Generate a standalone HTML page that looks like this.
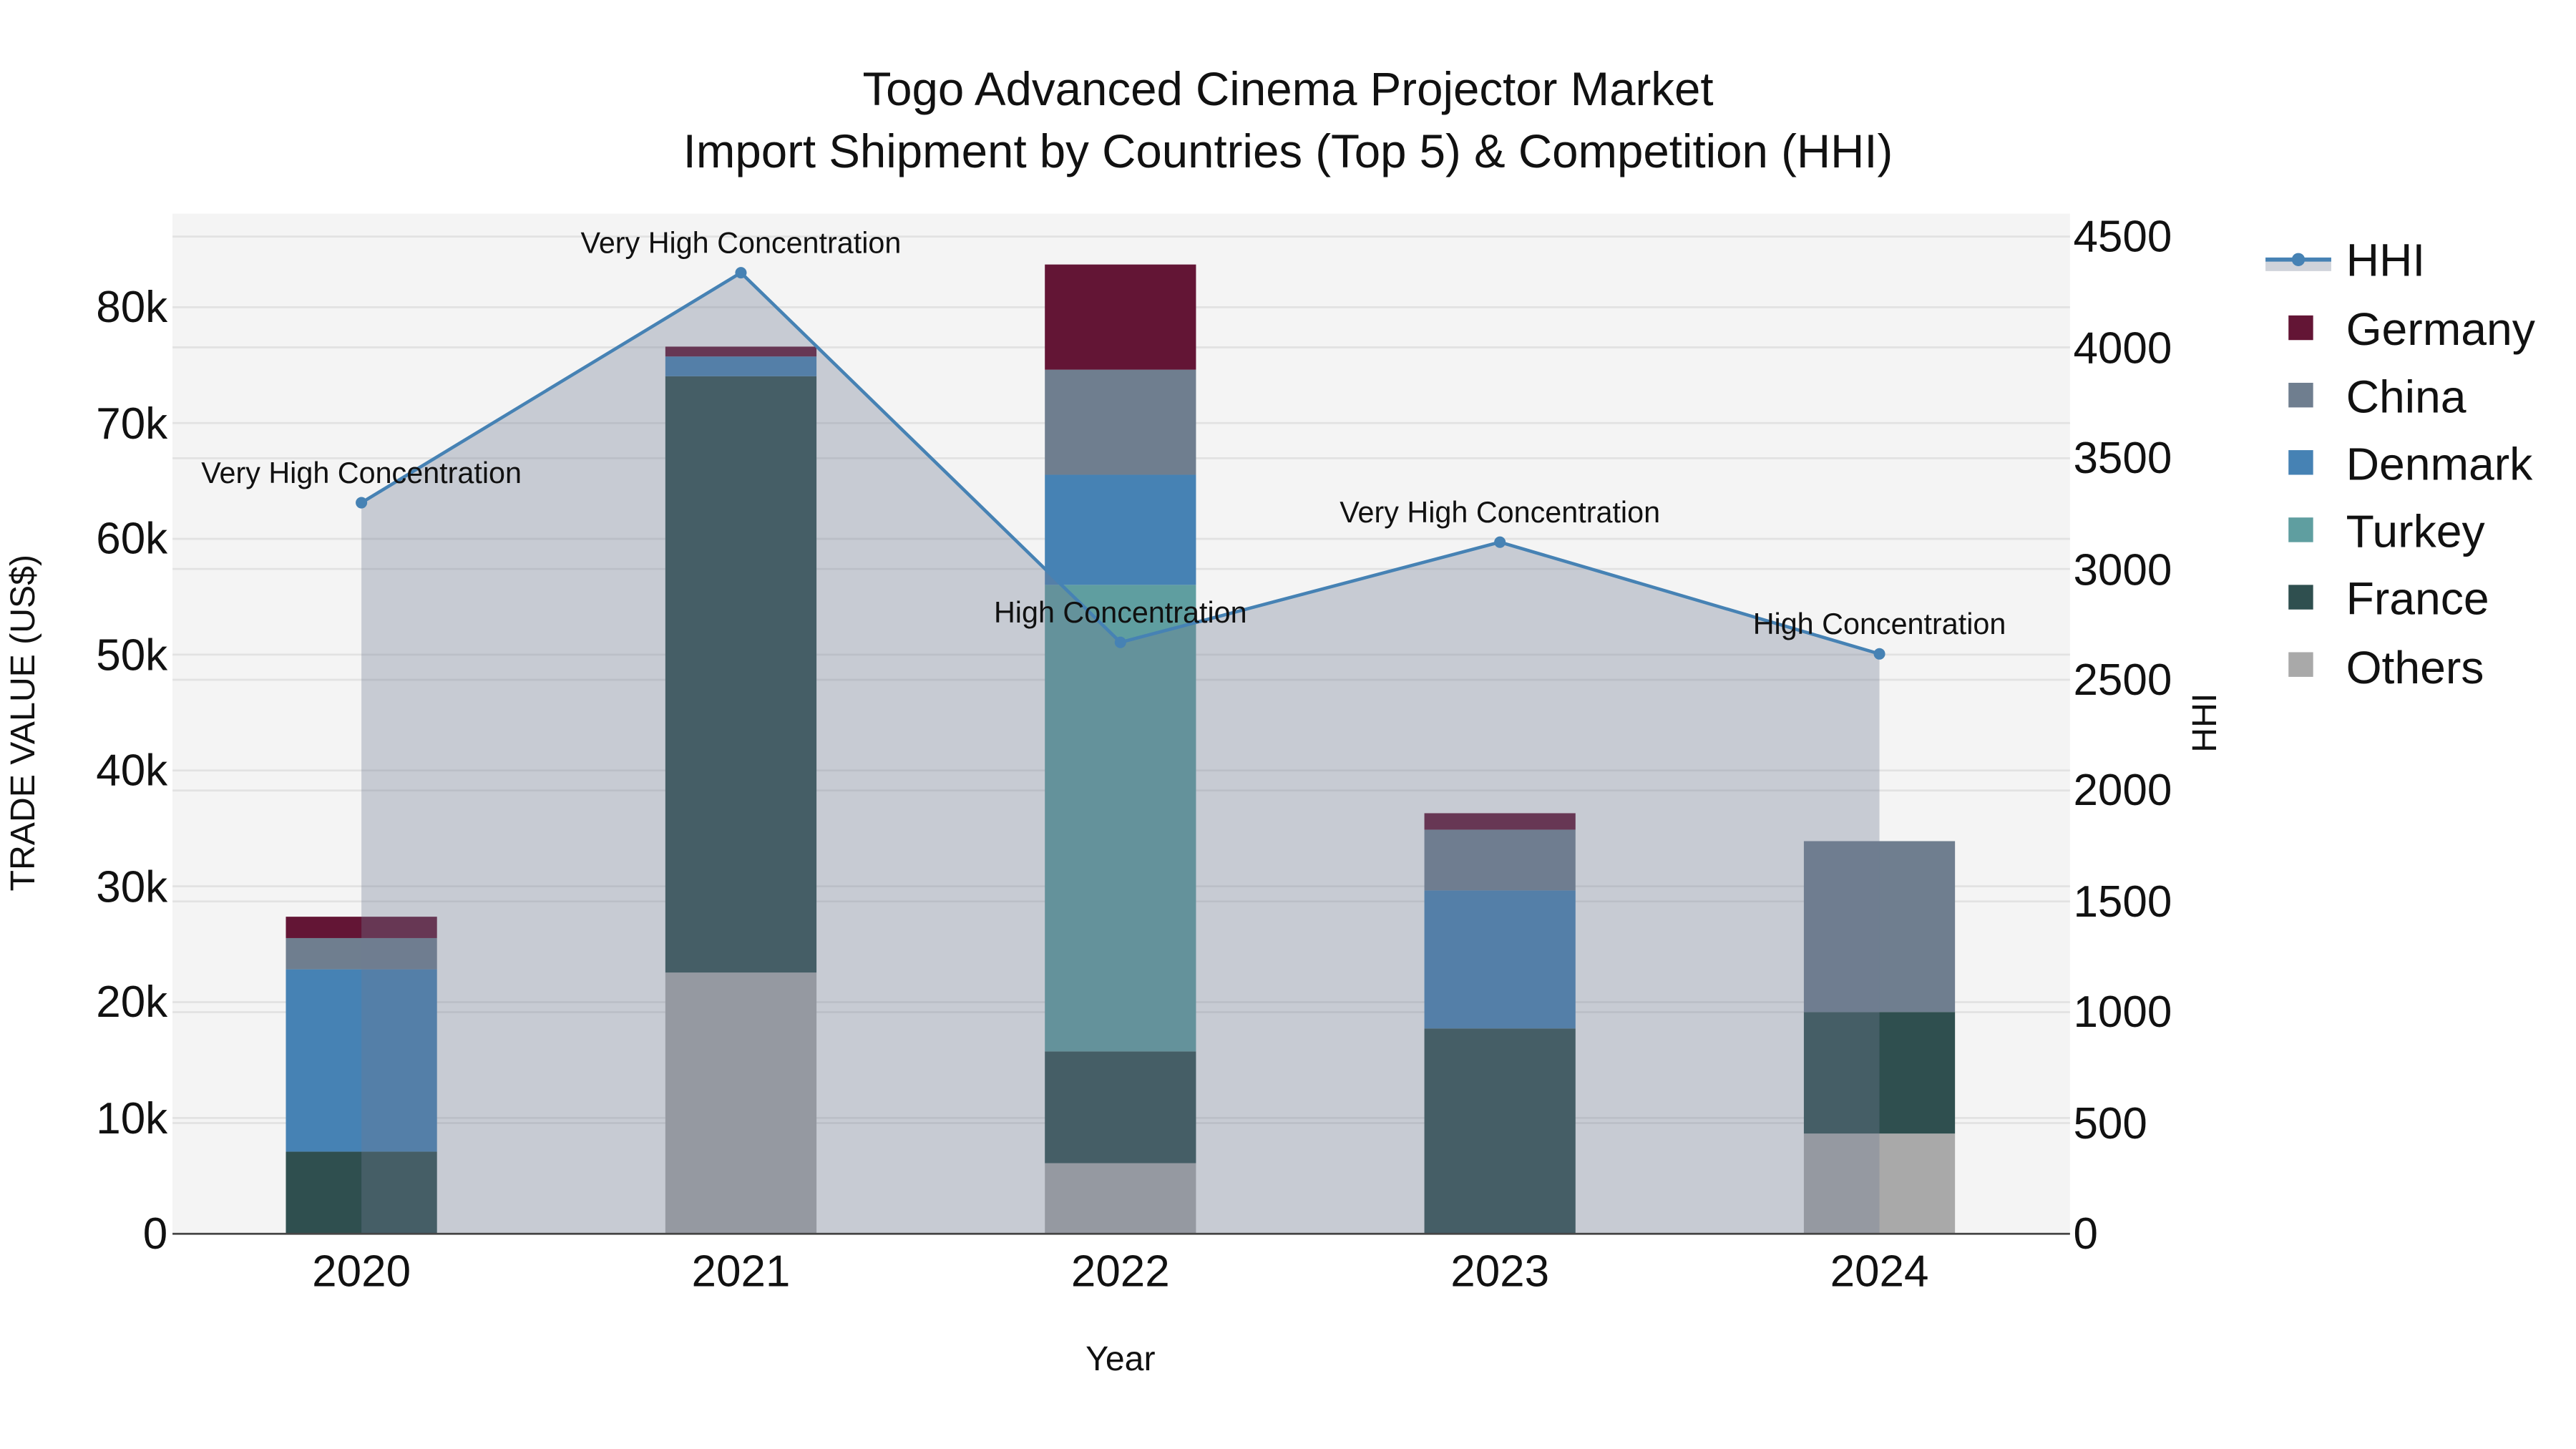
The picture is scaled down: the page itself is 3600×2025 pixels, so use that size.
<!DOCTYPE html>
<html><head><meta charset="utf-8"><style>html,body{margin:0;padding:0;background:#fff}svg{display:block}</style></head>
<body>
<svg width="3600" height="2025" viewBox="0 0 1568 882" preserveAspectRatio="none" xmlns="http://www.w3.org/2000/svg" font-family="'Liberation Sans', sans-serif">
<rect width="1568" height="882" fill="#fff"/>
<rect x="105" y="130" width="1155" height="621" fill="#f4f4f4"/>
<g stroke="#e2e2e2" stroke-width="1.2">
<line x1="105" x2="1260" y1="187" y2="187"/><line x1="105" x2="1260" y1="257.5" y2="257.5"/><line x1="105" x2="1260" y1="328" y2="328"/><line x1="105" x2="1260" y1="398.5" y2="398.5"/><line x1="105" x2="1260" y1="469" y2="469"/><line x1="105" x2="1260" y1="539.5" y2="539.5"/><line x1="105" x2="1260" y1="610" y2="610"/><line x1="105" x2="1260" y1="680.5" y2="680.5"/>
<line x1="105" x2="1260" y1="144" y2="144"/><line x1="105" x2="1260" y1="211.4" y2="211.4"/><line x1="105" x2="1260" y1="278.9" y2="278.9"/><line x1="105" x2="1260" y1="346.3" y2="346.3"/><line x1="105" x2="1260" y1="413.8" y2="413.8"/><line x1="105" x2="1260" y1="481.2" y2="481.2"/><line x1="105" x2="1260" y1="548.7" y2="548.7"/><line x1="105" x2="1260" y1="616.1" y2="616.1"/><line x1="105" x2="1260" y1="683.6" y2="683.6"/>
</g>
<g>
<rect x="174" y="701" width="92" height="50" fill="#2f4f4f"/>
<rect x="174" y="590" width="92" height="111" fill="#4682b4"/>
<rect x="174" y="571" width="92" height="19" fill="#6f7e8f"/>
<rect x="174" y="558" width="92" height="13" fill="#631535"/>

<rect x="405" y="592" width="92" height="159" fill="#a9a9a9"/>
<rect x="405" y="229" width="92" height="363" fill="#2f4f4f"/>
<rect x="405" y="217" width="92" height="12" fill="#4682b4"/>
<rect x="405" y="211" width="92" height="6" fill="#631535"/>

<rect x="636" y="708" width="92" height="43" fill="#a9a9a9"/>
<rect x="636" y="640" width="92" height="68" fill="#2f4f4f"/>
<rect x="636" y="356" width="92" height="284" fill="#5f9ea0"/>
<rect x="636" y="289" width="92" height="67" fill="#4682b4"/>
<rect x="636" y="225" width="92" height="64" fill="#6f7e8f"/>
<rect x="636" y="161" width="92" height="64" fill="#631535"/>

<rect x="867" y="626" width="92" height="125" fill="#2f4f4f"/>
<rect x="867" y="542" width="92" height="84" fill="#4682b4"/>
<rect x="867" y="505" width="92" height="37" fill="#6f7e8f"/>
<rect x="867" y="495" width="92" height="10" fill="#631535"/>

<rect x="1098" y="690" width="92" height="61" fill="#a9a9a9"/>
<rect x="1098" y="616" width="92" height="74" fill="#2f4f4f"/>
<rect x="1098" y="512" width="92" height="104" fill="#6f7e8f"/>
</g>
<polygon points="220,751 220,306 451,166 682,391 913,330 1144,398 1144,751" fill="rgba(110,122,146,0.34)"/>
<polyline points="220,306 451,166 682,391 913,330 1144,398" fill="none" stroke="#4682b4" stroke-width="2"/>
<g fill="#4682b4"><circle cx="220" cy="306" r="3.5"/><circle cx="451" cy="166" r="3.5"/><circle cx="682" cy="391" r="3.5"/><circle cx="913" cy="330" r="3.5"/><circle cx="1144" cy="398" r="3.5"/></g>
<line x1="105" x2="1260" y1="751" y2="751" stroke="#444" stroke-width="1.2"/>
<g font-size="18" fill="#111" text-anchor="middle">
<text x="220" y="294">Very High Concentration</text>
<text x="451" y="154">Very High Concentration</text>
<text x="682" y="379">High Concentration</text>
<text x="913" y="318">Very High Concentration</text>
<text x="1144" y="386">High Concentration</text>
</g>
<g font-size="27" fill="#111" text-anchor="end">
<text x="102" y="760">0</text><text x="102" y="690">10k</text><text x="102" y="619">20k</text><text x="102" y="549">30k</text><text x="102" y="478">40k</text><text x="102" y="408">50k</text><text x="102" y="337">60k</text><text x="102" y="267">70k</text><text x="102" y="196">80k</text>
</g>
<g font-size="27" fill="#111" text-anchor="start">
<text x="1262" y="760">0</text><text x="1262" y="693">500</text><text x="1262" y="625">1000</text><text x="1262" y="558">1500</text><text x="1262" y="490">2000</text><text x="1262" y="423">2500</text><text x="1262" y="356">3000</text><text x="1262" y="288">3500</text><text x="1262" y="221">4000</text><text x="1262" y="153">4500</text>
</g>
<g font-size="27" fill="#111" text-anchor="middle">
<text x="220" y="783">2020</text><text x="451" y="783">2021</text><text x="682" y="783">2022</text><text x="913" y="783">2023</text><text x="1144" y="783">2024</text>
</g>
<text x="682" y="834" font-size="21" fill="#111" text-anchor="middle">Year</text>
<text transform="translate(21,440) rotate(-90)" font-size="21" fill="#111" text-anchor="middle">TRADE VALUE (US$)</text>
<text transform="translate(1349,440) rotate(-90)" font-size="21" fill="#111" text-anchor="middle">HHI</text>
<g font-size="28.5" fill="#111" text-anchor="middle">
<text x="784" y="64">Togo Advanced Cinema Projector Market</text>
<text x="784" y="102">Import Shipment by Countries (Top 5) &amp; Competition (HHI)</text>
</g>
<rect x="1379" y="159" width="40" height="6" fill="#cfd3da"/>
<line x1="1379" x2="1419" y1="158" y2="158" stroke="#4682b4" stroke-width="2.5"/>
<circle cx="1399" cy="158" r="4" fill="#4682b4"/>
<g>
<rect x="1393" y="192" width="15" height="15" fill="#631535"/>
<rect x="1393" y="233" width="15" height="15" fill="#6f7e8f"/>
<rect x="1393" y="274" width="15" height="15" fill="#4682b4"/>
<rect x="1393" y="315" width="15" height="15" fill="#5f9ea0"/>
<rect x="1393" y="356" width="15" height="15" fill="#2f4f4f"/>
<rect x="1393" y="397" width="15" height="15" fill="#a9a9a9"/>
</g>
<g font-size="28" fill="#111">
<text x="1428" y="168">HHI</text>
<text x="1428" y="210">Germany</text>
<text x="1428" y="251">China</text>
<text x="1428" y="292">Denmark</text>
<text x="1428" y="333">Turkey</text>
<text x="1428" y="374">France</text>
<text x="1428" y="416">Others</text>
</g>
</svg>
</body></html>
